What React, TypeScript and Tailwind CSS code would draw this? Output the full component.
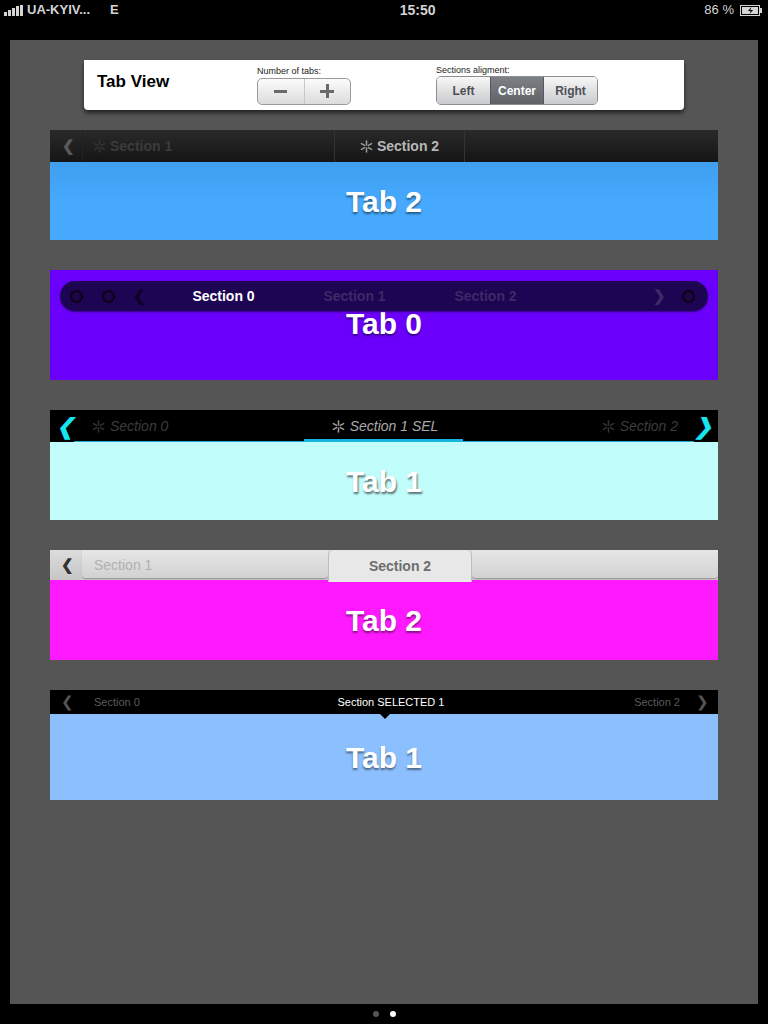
import React from 'react'

const font = { fontFamily: '"Liberation Sans", Arial, sans-serif' }

function Star({ className = '' }: { className?: string }) {
  return (
    <svg viewBox="0 0 12 12" className={`w-[13px] h-[13px] ${className}`} fill="none" stroke="currentColor" strokeWidth="1.4" strokeLinecap="round">
      <path d="M6 1v3.5M6 7.5V11M1.3 3.3l3 1.7M7.7 7l3 1.7M1.3 8.7l3-1.7M7.7 5l3-1.7" />
    </svg>
  )
}

function StatusBar() {
  return (
    <div className="h-5 flex items-center px-1 text-[14px] font-bold text-[#d4d4d4]">
      <div className="flex items-end gap-[1px] h-[11px] mr-1">
        <span className="w-[3px] h-[4px] bg-[#d4d4d4]" />
        <span className="w-[3px] h-[6px] bg-[#d4d4d4]" />
        <span className="w-[3px] h-[8px] bg-[#d4d4d4]" />
        <span className="w-[3px] h-[10px] bg-[#d4d4d4]" />
        <span className="w-[3px] h-[11px] bg-[#d4d4d4]" />
      </div>
      <span className="text-[13px]">UA-KYIV...</span>
      <span className="ml-[20px] text-[13px]">E</span>
      <span className="flex-1 text-center text-[14px] pl-[12px]">15:50</span>
      <span className="text-[13px] font-normal mr-[6px]">86 %</span>
      <div className="flex items-center mr-[2px]">
        <div className="w-[20px] h-[11px] border border-[#d4d4d4] flex items-center justify-center p-[1px]">
          <div className="w-full h-full bg-[#d4d4d4] flex items-center justify-center">
            <svg viewBox="0 0 10 8" className="w-[9px] h-[7px]"><path d="M6 0L2 4.5h3L4 8l4-4.5H5z" fill="#111" /></svg>
          </div>
        </div>
        <span className="w-[2px] h-[5px] bg-[#d4d4d4]" />
      </div>
    </div>
  )
}

function Controls() {
  return (
    <div className="mx-[74px] h-[50px] bg-white rounded-b-[4px] shadow-[0_3px_4px_rgba(0,0,0,0.6)] flex items-center px-[13px]">
      <span className="text-[17px] font-bold text-black w-[160px] -mt-[6px]">Tab View</span>
      <div className="flex flex-col">
        <span className="text-[9px] text-[#222] leading-[10px] mb-[2px]">Number of tabs:</span>
        <div className="w-[94px] h-[27px] rounded-[5px] border border-[#9a9a9a] bg-gradient-to-b from-[#fbfbfb] to-[#dcdcdc] flex">
          <div className="flex-1 flex items-center justify-center border-r border-[#c8c8c8]">
            <span className="w-[13px] h-[3px] bg-[#6a6a6a]" />
          </div>
          <div className="flex-1 flex items-center justify-center relative">
            <span className="w-[14px] h-[3px] bg-[#6a6a6a]" />
            <span className="absolute w-[3px] h-[14px] bg-[#6a6a6a]" />
          </div>
        </div>
      </div>
      <div className="flex flex-col ml-[85px]">
        <span className="text-[9px] text-[#222] leading-[10px] mb-[1px]">Sections aligment:</span>
        <div className="w-[162px] h-[29px] rounded-[5px] border border-[#8e8e8e] overflow-hidden flex text-[12px] font-bold">
          <div className="w-[53px] flex items-center justify-center bg-gradient-to-b from-[#f8f8f8] to-[#c9cace] text-[#4d5156]">Left</div>
          <div className="w-[54px] flex items-center justify-center bg-gradient-to-b from-[#7d8085] to-[#5f6267] text-white border-x border-[#55585c]">Center</div>
          <div className="flex-1 flex items-center justify-center bg-gradient-to-b from-[#f8f8f8] to-[#c9cace] text-[#4d5156]">Right</div>
        </div>
      </div>
    </div>
  )
}

const label = 'text-[30px] font-bold text-white [text-shadow:0_2px_2px_rgba(0,0,0,0.45)]'

function Block1() {
  return (
    <div className="flex flex-col">
      <div className="h-[32px] bg-gradient-to-b from-[#2a2a2a] to-[#151515] flex items-center text-[14px] font-bold">
        <span className="w-[32px] pl-[12px] text-[#5a5a5a] text-[15px]">❮</span>
        <div className="w-[252px] h-full flex items-center gap-[4px] pl-[10px] border-l border-[#222] text-[#3b3b3b]">
          <Star className="text-[#333]" />
          <span>Section 1</span>
        </div>
        <div className="w-[131px] h-full flex items-center justify-center gap-[4px] border-x border-[#333] text-[#b7b7b7]">
          <Star className="text-[#9a9a9a]" />
          <span>Section 2</span>
        </div>
      </div>
      <div className="h-[78px] bg-gradient-to-b from-[#3f9ff0] via-[#46a9fd] to-[#46a9fd] flex items-center justify-center">
        <span className={label}>Tab 2</span>
      </div>
    </div>
  )
}

function Ring() {
  return <span className="block shrink-0 w-[13px] h-[13px] rounded-full border-2 border-[#0a0215] bg-[#1c0645]" />
}

function Block2() {
  return (
    <div className="h-[110px] bg-[#6a00fc] flex flex-col px-[10px] pt-[11px]">
      <div className="h-[30px] rounded-full bg-[#1d0553] shadow-[0_1px_2px_rgba(0,0,0,0.5)] flex items-center text-[14px] font-bold relative z-10">
        <span className="shrink-0 ml-[10px]"><Ring /></span>
        <span className="shrink-0 ml-[19px]"><Ring /></span>
        <span className="shrink-0 ml-[18px] text-[#0d0226] text-[15px]">❮</span>
        <span className="shrink-0 w-[131px] ml-[12px] text-center text-white">Section 0</span>
        <span className="shrink-0 w-[131px] text-center text-[#3d2a66]">Section 1</span>
        <span className="shrink-0 w-[131px] text-center text-[#3d2a66]">Section 2</span>
        <span className="shrink-0 ml-[102px] text-[#3d2a66] text-[15px]">❯</span>
        <span className="shrink-0 ml-[16px]"><Ring /></span>
      </div>
      <div className="flex-1 flex items-start justify-center -mt-[4px]">
        <span className={`${label} leading-[34px]`}>Tab 0</span>
      </div>
    </div>
  )
}

function Block3() {
  return (
    <div className="flex flex-col">
      <div className="h-[32px] bg-black flex flex-col">
        <div className="h-[29px] pt-[3px] flex items-center italic text-[14px]">
          <span className="w-[30px] text-center text-[#16e4f0] text-[22px] font-bold">❮</span>
          <div className="flex items-center gap-[5px] ml-[12px] text-[#3c3c3c]">
            <Star className="text-[#333]" />
            <span>Section 0</span>
          </div>
          <div className="flex-1 flex items-center justify-center gap-[5px] text-[#a9a9a9]">
            <Star className="text-[#a0a0a0]" />
            <span>Section 1 SEL</span>
          </div>
          <div className="flex items-center gap-[5px] mr-[10px] text-[#3c3c3c]">
            <Star className="text-[#333]" />
            <span>Section 2</span>
          </div>
          <span className="w-[30px] text-center text-[#16e4f0] text-[22px] font-bold">❯</span>
        </div>
        <div className="h-[3px] mx-[24px] flex items-end">
          <div className="w-[230px] shrink-0 h-px bg-[#18a8c8]" />
          <div className="w-[159px] shrink-0 h-[3px] bg-[#17b6e0]" />
          <div className="flex-1 h-px bg-[#18a8c8]" />
        </div>
      </div>
      <div className="h-[78px] bg-[#c1fdfb] flex items-center justify-center">
        <span className="text-[30px] font-bold text-white [text-shadow:1px_2px_2px_rgba(0,0,0,0.55)]">Tab 1</span>
      </div>
    </div>
  )
}

function Block4() {
  return (
    <div className="flex flex-col">
      <div className="h-[30px] bg-gradient-to-b from-[#dcdcdc] to-[#c6c6c6] flex items-stretch text-[14px] font-bold relative">
        <span className="w-[32px] pl-[11px] flex items-center text-[#333] text-[15px]">❮</span>
        <div className="w-[246px] flex items-center pl-[12px] pt-[3px] text-[#b0b0b0] font-normal rounded-b-[4px] bg-gradient-to-b from-[#e6e6e6] to-[#d2d2d2] shadow-[0_1px_1px_rgba(0,0,0,0.25)] mb-[2px]">
          Section 1
        </div>
        <div className="w-[144px] flex items-center justify-center text-[#6d6d6d] bg-[#e8e8e8] rounded-t-[5px] border-x border-[#bdbdbd] relative z-10 h-[32px]">
          Section 2
        </div>
        <div className="flex-1 rounded-b-[4px] bg-gradient-to-b from-[#e6e6e6] to-[#d2d2d2] shadow-[0_1px_1px_rgba(0,0,0,0.25)] mb-[2px]" />
      </div>
      <div className="h-[80px] bg-[#ff19ff] flex items-center justify-center">
        <span className={label}>Tab 2</span>
      </div>
    </div>
  )
}

function Block5() {
  return (
    <div className="flex flex-col">
      <div className="h-[24px] bg-black flex items-center text-[11px] relative">
        <span className="w-[32px] pl-[11px] text-[#555] text-[15px]">❮</span>
        <span className="ml-[12px] text-[#5a5a5a]">Section 0</span>
        <span className="flex-1 text-center text-white pl-[8px]">Section SELECTED 1</span>
        <span className="mr-[16px] text-[#5a5a5a]">Section 2</span>
        <span className="w-[22px] text-[#555] text-[15px]">❯</span>
        <span className="absolute left-[330px] -bottom-[5px] w-0 h-0 border-x-[5px] border-x-transparent border-t-[5px] border-t-black" />
      </div>
      <div className="h-[86px] bg-[#8cbffd] flex items-center justify-center">
        <span className={label}>Tab 1</span>
      </div>
    </div>
  )
}

export default function App() {
  return (
    <div className="w-[768px] h-[1024px] bg-black flex flex-col" style={font}>
      <StatusBar />
      <div className="mx-[10px] mt-[20px] h-[964px] bg-[#555555] flex flex-col">
        <div className="mt-[20px]">
          <Controls />
        </div>
        <div className="mx-[40px] mt-[20px] flex flex-col gap-[30px]">
          <Block1 />
          <Block2 />
          <Block3 />
          <Block4 />
          <Block5 />
        </div>
      </div>
      <div className="flex-1 flex items-center justify-center gap-[11px]">
        <span className="w-[6px] h-[6px] rounded-full bg-[#555]" />
        <span className="w-[6px] h-[6px] rounded-full bg-white" />
      </div>
    </div>
  )
}
